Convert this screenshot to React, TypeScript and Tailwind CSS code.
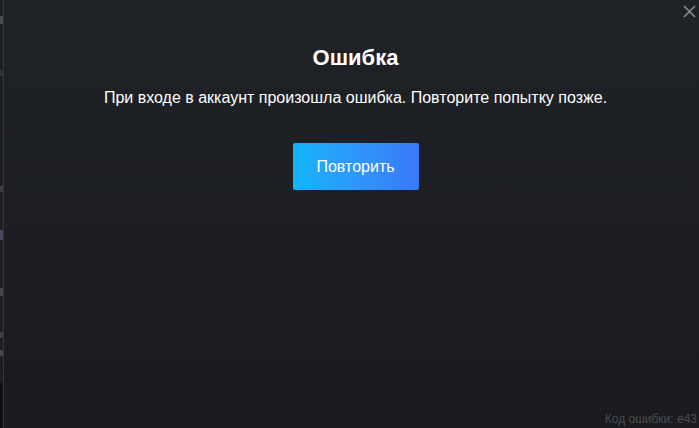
import React from "react";

export default function App() {
  return (
    <div
      className="flex h-[428px] w-[699px] overflow-hidden bg-[#1c1d21]"
      style={{ fontFamily: '"Liberation Sans", Arial, sans-serif' }}
    >
      <div className="flex w-[3px] flex-col bg-[#1d1f24]">
        <div className="mt-[16px] h-[8px] w-[3px] bg-[#4a4c52]" />
        <div className="mt-[46px] h-[6px] w-[3px] bg-[#303237]" />
        <div className="mt-[110px] h-[6px] w-[3px] bg-[#3a3c41]" />
        <div className="mt-[38px] h-[10px] w-[3px] bg-[#4e4563]" />
        <div className="mt-[48px] h-[8px] w-[3px] bg-[#45474c]" />
        <div className="mt-[36px] h-[6px] w-[3px] bg-[#463848]" />
        <div className="mt-[12px] h-[6px] w-[3px] bg-[#45474c]" />
        <div className="mt-auto h-[45px] w-[3px] bg-[#0e0f11]" />
      </div>
      <div className="w-px bg-[#34363c]" />
      <div className="relative flex flex-1 flex-col items-center bg-gradient-to-b from-[#1f2227] to-[#1a1b1f] pl-[8px]">
        <button className="absolute right-[3px] top-[5px] text-[#8a9296]">
          <svg width="13" height="13" viewBox="0 0 13 13" fill="none">
            <path d="M1 1L12 12M12 1L1 12" stroke="currentColor" strokeWidth="1.5" />
          </svg>
        </button>
        <h1 className="mt-[44px] text-[22px] font-bold leading-[28px] text-white">Ошибка</h1>
        <p className="mt-[16px] text-[16px] leading-[20px] text-white">
          При входе в аккаунт произошла ошибка. Повторите попытку позже.
        </p>
        <button className="mt-[35px] h-[47px] w-[126px] rounded-[2px] bg-gradient-to-r from-[#10b4fb] to-[#3b78f7] text-[16px] text-white">
          Повторить
        </button>
        <div className="mt-auto mb-[2px] self-end whitespace-nowrap pr-[2px] text-[12px] leading-[14px] text-[#4a4d53]">
          Код ошибки: e43
        </div>
      </div>
    </div>
  );
}
